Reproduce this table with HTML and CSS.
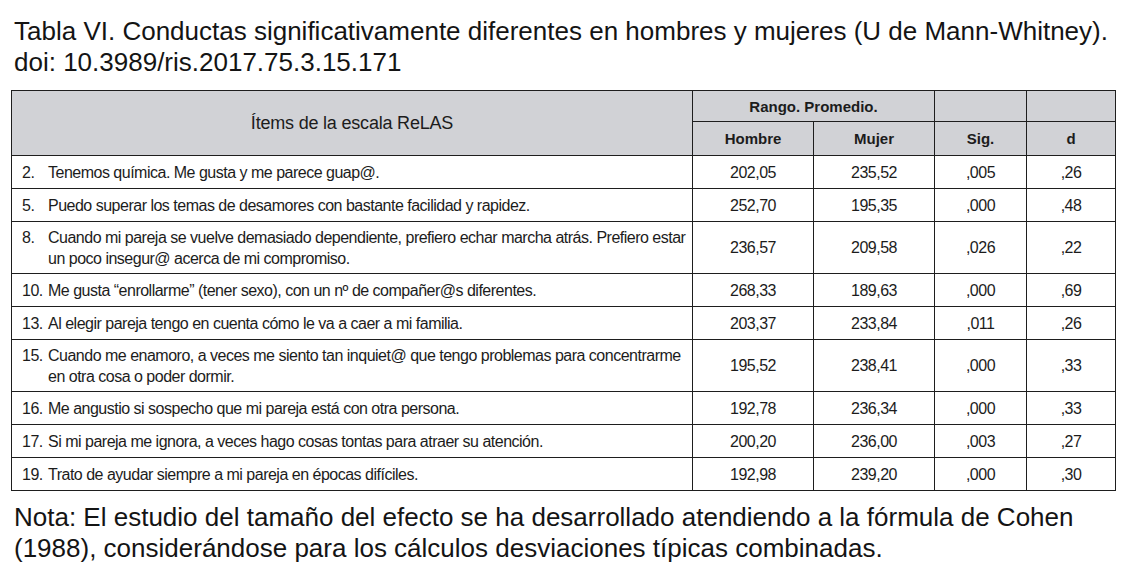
FILE: index.html
```html
<!DOCTYPE html>
<html lang="es">
<head>
<meta charset="utf-8">
<title>Tabla VI</title>
<link rel="stylesheet" href="styles.css">
</head>
<body>
<p class="caption">Tabla VI. Conductas significativamente diferentes en hombres y mujeres (U de Mann-Whitney).<br>doi: 10.3989/ris.2017.75.3.15.171</p>
<table class="data">
  <colgroup>
    <col class="c-item"><col class="c-h"><col class="c-m"><col class="c-s"><col class="c-d">
  </colgroup>
  <thead>
    <tr class="h1">
      <th rowspan="2" class="items">Ítems de la escala ReLAS</th>
      <th colspan="2">Rango. Promedio.</th>
      <th></th>
      <th></th>
    </tr>
    <tr class="h2">
      <th>Hombre</th>
      <th>Mujer</th>
      <th>Sig.</th>
      <th>d</th>
    </tr>
  </thead>
  <tbody>
    <tr><td class="item"><div class="it"><span class="n">2.</span><span class="t">Tenemos química. Me gusta y me parece guap@.</span></div></td><td>202,05</td><td>235,52</td><td>,005</td><td>,26</td></tr>
    <tr><td class="item"><div class="it"><span class="n">5.</span><span class="t">Puedo superar los temas de desamores con bastante facilidad y rapidez.</span></div></td><td>252,70</td><td>195,35</td><td>,000</td><td>,48</td></tr>
    <tr><td class="item"><div class="it"><span class="n">8.</span><span class="t">Cuando mi pareja se vuelve demasiado dependiente, prefiero echar marcha atrás. Prefiero estar un poco insegur@ acerca de mi compromiso.</span></div></td><td>236,57</td><td>209,58</td><td>,026</td><td>,22</td></tr>
    <tr><td class="item"><div class="it"><span class="n">10.</span><span class="t">Me gusta “enrollarme” (tener sexo), con un nº de compañer@s diferentes.</span></div></td><td>268,33</td><td>189,63</td><td>,000</td><td>,69</td></tr>
    <tr><td class="item"><div class="it"><span class="n">13.</span><span class="t">Al elegir pareja tengo en cuenta cómo le va a caer a mi familia.</span></div></td><td>203,37</td><td>233,84</td><td>,011</td><td>,26</td></tr>
    <tr><td class="item"><div class="it"><span class="n">15.</span><span class="t">Cuando me enamoro, a veces me siento tan inquiet@ que tengo problemas para concentrarme en otra cosa o poder dormir.</span></div></td><td>195,52</td><td>238,41</td><td>,000</td><td>,33</td></tr>
    <tr><td class="item"><div class="it"><span class="n">16.</span><span class="t">Me angustio si sospecho que mi pareja está con otra persona.</span></div></td><td>192,78</td><td>236,34</td><td>,000</td><td>,33</td></tr>
    <tr><td class="item"><div class="it"><span class="n">17.</span><span class="t">Si mi pareja me ignora, a veces hago cosas tontas para atraer su atención.</span></div></td><td>200,20</td><td>236,00</td><td>,003</td><td>,27</td></tr>
    <tr><td class="item"><div class="it"><span class="n">19.</span><span class="t">Trato de ayudar siempre a mi pareja en épocas difíciles.</span></div></td><td>192,98</td><td>239,20</td><td>,000</td><td>,30</td></tr>
  </tbody>
</table>
<p class="note">Nota: El estudio del tamaño del efecto se ha desarrollado atendiendo a la fórmula de Cohen<br>(1988), considerándose para los cálculos desviaciones típicas combinadas.</p>
</body>
</html>
```

FILE: styles.css
```css
html, body {
  margin: 0;
  padding: 0;
  background: #ffffff;
}
body {
  padding: 16px 0 0 11px;
  color: #111111;
  font-family: "Liberation Sans", Arial, sans-serif;
}
.caption {
  margin: 0 0 12px 3px;
  font-size: 26px;
  line-height: 31px;
  color: #141414;
}
.note {
  margin: 11px 0 0 3px;
  font-size: 26px;
  line-height: 31px;
  color: #141414;
}
.data {
  border-collapse: collapse;
  width: 1104px;
  table-layout: fixed;
  font-family: "Liberation Sans", Arial, sans-serif;
  font-size: 16px;
  letter-spacing: -0.5px;
  color: #1c1c1c;
}
.c-item { width: 681px; }
.c-h { width: 121px; }
.c-m { width: 121px; }
.c-s { width: 92px; }
.c-d { width: 89px; }
.data th, .data td {
  border: 1px solid #1e1e1e;
  padding: 0;
}
.data thead th {
  background: #d1d2d6;
  font-weight: bold;
  font-size: 15px;
  letter-spacing: 0;
  text-align: center;
  vertical-align: middle;
}
.data thead th.items {
  font-weight: normal;
  font-size: 18px;
  letter-spacing: -0.2px;
}
.h1 th { height: 30px; }
.h2 th { height: 33px; }
.data tbody td {
  text-align: center;
  vertical-align: middle;
  height: 32px;
  line-height: 21px;
}
.data tbody td.item {
  text-align: left;
  padding: 5px 2px 4px 10px;
  height: auto;
}
.it {
  display: flex;
}
.n {
  flex: 0 0 26px;
}
.t {
  flex: 1 1 auto;
}
```
